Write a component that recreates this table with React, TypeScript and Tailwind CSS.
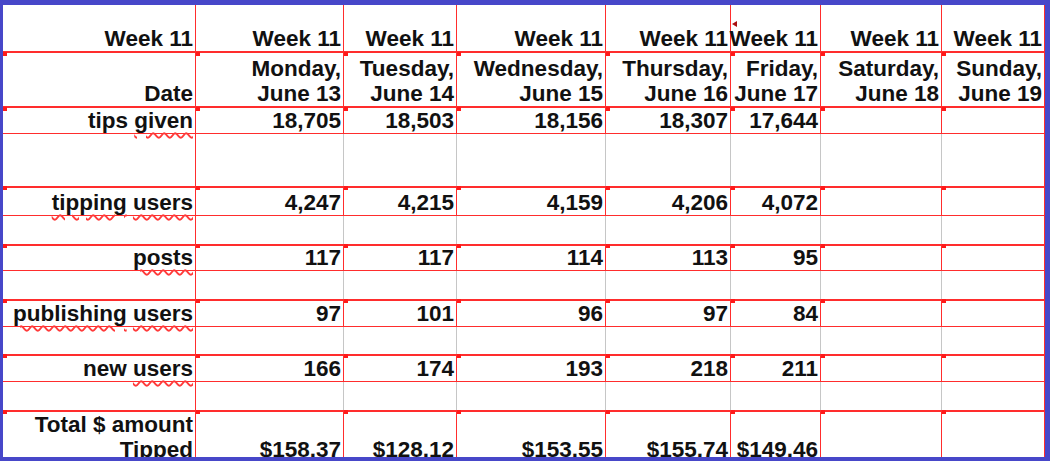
import React from "react";

type Row = {
	h: number;
	kind: "data" | "empty";
	top?: "none" | "thin" | "thick";
	cells?: string[];
	label?: React.ReactNode;
	marker?: boolean;
};

const sq = "underline decoration-wavy decoration-[#ff3a3a] decoration-[1.5px] underline-offset-[4px]";

const rows: Row[] = [
	{
		h: 47,
		kind: "data",
		top: "none",
		label: "Week 11",
		cells: Array(7).fill("Week 11"),
	},
	{
		h: 55,
		kind: "data",
		top: "thin",
		marker: true,
		label: "Date",
		cells: [
			"Monday,\nJune 13",
			"Tuesday,\nJune 14",
			"Wednesday,\nJune 15",
			"Thursday,\nJune 16",
			"Friday,\nJune 17",
			"Saturday,\nJune 18",
			"Sunday,\nJune 19",
		],
	},
	{
		h: 27,
		kind: "data",
		top: "thin",
		marker: true,
		label: (
			<>
				tips <span className={sq}>given</span>
			</>
		),
		cells: ["18,705", "18,503", "18,156", "18,307", "17,644", "", ""],
	},
	{ h: 52, kind: "empty" },
	{
		h: 30,
		kind: "data",
		top: "thick",
		marker: true,
		label: (
			<>
				<span className={sq}>tipping</span> <span className={sq}>users</span>
			</>
		),
		cells: ["4,247", "4,215", "4,159", "4,206", "4,072", "", ""],
	},
	{ h: 28, kind: "empty" },
	{
		h: 27,
		kind: "data",
		top: "thick",
		marker: true,
		label: <span className={sq}>posts</span>,
		cells: ["117", "117", "114", "113", "95", "", ""],
	},
	{ h: 28, kind: "empty" },
	{
		h: 28,
		kind: "data",
		top: "thick",
		marker: true,
		label: (
			<>
				<span className={sq}>publishing</span> <span className={sq}>users</span>
			</>
		),
		cells: ["97", "101", "96", "97", "84", "", ""],
	},
	{ h: 27, kind: "empty" },
	{
		h: 28,
		kind: "data",
		top: "thick",
		marker: true,
		label: (
			<>
				new <span className={sq}>users</span>
			</>
		),
		cells: ["166", "174", "193", "218", "211", "", ""],
	},
	{ h: 28, kind: "empty" },
	{
		h: 53,
		kind: "data",
		top: "thick",
		marker: true,
		label: (
			<>
				Total $ amount
				<br />
				Tipped
			</>
		),
		cells: ["$158.37", "$128.12", "$153.55", "$155.74", "$149.46", "", ""],
	},
];

const topClass = {
	none: "",
	thin: "border-t border-t-[#ff2d2d]",
	thick: "border-t-2 border-t-[#ff2d2d]",
};

function DataCell({
	children,
	top,
	marker,
	comment,
}: {
	children?: React.ReactNode;
	top: "none" | "thin" | "thick";
	marker?: boolean;
	comment?: boolean;
}) {
	return (
		<div
			className={`relative flex items-end justify-end pr-[2px] border-r border-r-[#ff2d2d] border-b border-b-[#ff2d2d] ${topClass[top]} text-right leading-[25px] whitespace-pre`}
		>
			{marker && (
				<span
					className={`absolute left-0 w-[4px] h-[4px] bg-[#ff1a1a] ${
						top === "thick" ? "-top-[2px]" : "-top-px"
					}`}
				/>
			)}
			{comment && (
				<span className="absolute left-[1px] top-[16px] w-0 h-0 border-y-[3px] border-y-transparent border-r-[5px] border-r-[#a81010]" />
			)}
			<span className="relative">{children}</span>
		</div>
	);
}

export default function App() {
	return (
		<div className="w-[1050px] h-[461px] overflow-hidden bg-white border-l-[3px] border-t-[5px] border-r-[5px] border-b-[4px] border-[#4747c9]">
			<div
				className="grid grid-cols-[193px_148px_113px_149px_125px_90px_121px_103px] text-[22.5px] font-bold text-[#111]"
				style={{
					fontFamily: '"Liberation Sans", Arial, sans-serif',
					gridTemplateRows: rows.map((r) => `${r.h}px`).join(" "),
				}}
			>
				{rows.map((r, ri) =>
					r.kind === "empty" ? (
						<React.Fragment key={ri}>
							<div className="border-r border-r-[#ff2d2d]" />
							{Array.from({ length: 7 }).map((_, ci) => (
								<div
									key={ci}
									className={`border-r ${ci === 6 ? "border-r-[#ff2d2d]" : "border-r-[#c6c6c6]"}`}
								/>
							))}
						</React.Fragment>
					) : (
						<React.Fragment key={ri}>
							<DataCell top={r.top!} marker={r.marker}>
								{r.label}
							</DataCell>
							{r.cells!.map((c, ci) => (
								<DataCell
									key={ci}
									top={r.top!}
									marker={r.marker}
									comment={ri === 0 && ci === 4}
								>
									{c}
								</DataCell>
							))}
						</React.Fragment>
					)
				)}
			</div>
		</div>
	);
}
